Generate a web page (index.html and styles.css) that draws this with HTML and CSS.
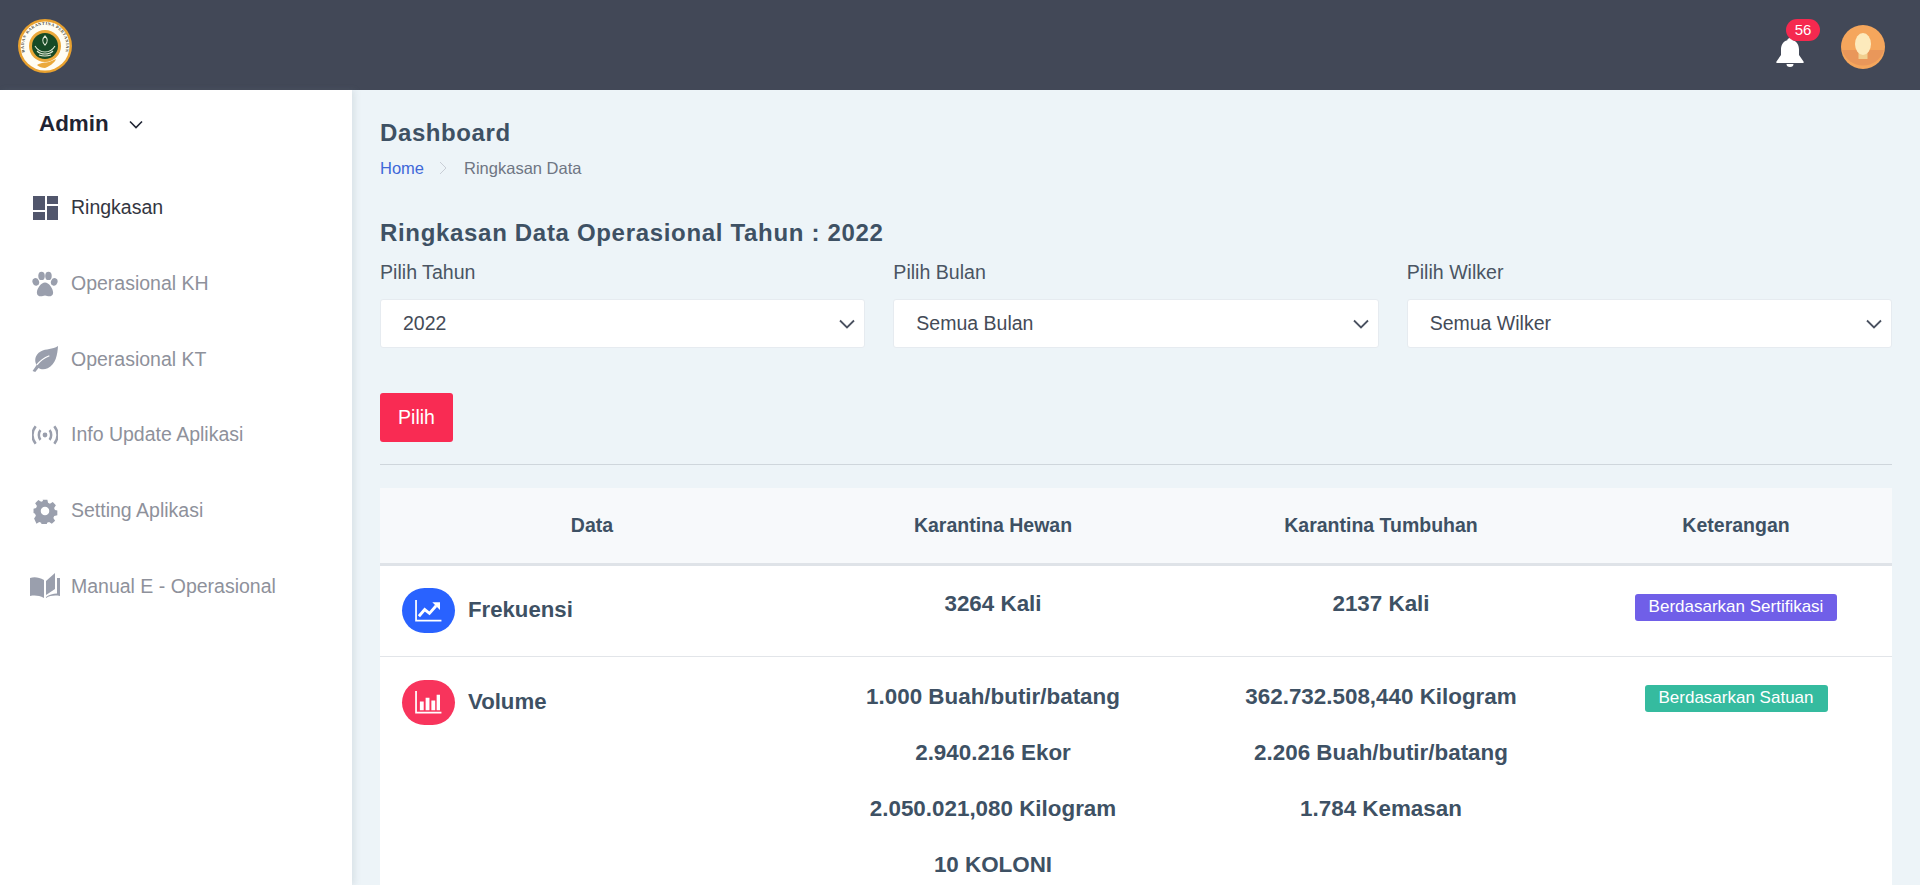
FILE: index.html
```html
<!DOCTYPE html>
<html lang="id">
<head>
<meta charset="utf-8">
<title>Dashboard</title>
<link rel="stylesheet" href="styles.css">
</head>
<body>
<header class="topbar">
  <svg class="logo" viewBox="0 0 54 54" aria-label="Logo">
    <defs><path id="logoArc" d="M11 41A21.200 21.200 0 1 1 43 41"/></defs>
    <circle cx="27" cy="27" r="27" fill="#e9a12e"/>
    <circle cx="27" cy="27" r="24.500" fill="#fffdf3"/>
    <text class="logo-text"><textPath href="#logoArc" startOffset="50%" text-anchor="middle">BADAN KARANTINA PERTANIAN</textPath></text>
    <circle cx="27" cy="27" r="16" fill="#eba93a"/>
    <circle cx="27" cy="27" r="13" fill="#174a25"/>
    <path d="M27 17c3 3 3 6 0 9c-3-3-3-6 0-9zM17 27c3 5 7 6 10 6s7-1 10-6M19 32c3 3 5 3 8 3s5 0 8-3M21 36c3 1 4 1 6 1s3 0 6-1" fill="none" stroke="#dfe8d4" stroke-width="1.100"/>
    <path d="M19 46c5-3 8-2 12-3l7-3c-1 4-8 8-11 9c-3 0-6-1-8-3z" fill="#eba93a"/>
  </svg>
  <div class="top-actions">
    <div class="bell">
      <svg viewBox="0 0 30 30" class="bell-icon"><path d="M15 1c1.500 0 2.500 1 2.700 2.200C22 4.500 24 8 24 12.500V18l4.500 6.500c.5.8 0 1.500-.8 1.500H2.300c-.8 0-1.300-.7-.8-1.500L6 18v-5.500C6 8 8 4.500 12.300 3.200 12.500 2 13.500 1 15 1z" fill="#fff"/><path d="M11.500 27a3.500 3 0 0 0 7 0z" fill="#fff"/></svg>
      <span class="bell-count">56</span>
    </div>
    <svg class="avatar" viewBox="0 0 44 44" aria-label="Profil">
      <circle cx="22" cy="22" r="22" fill="#f5a65c"/>
      <path d="M1 25h42a22 22 0 0 1-42 0z" fill="#e9975a"/>
      <rect x="17.500" y="26" width="9" height="8" fill="#f1cf8f"/>
      <ellipse cx="22" cy="19" rx="8" ry="11" fill="#fdeabc"/>
    </svg>
  </div>
</header>

<div class="shell">
  <aside class="sidebar">
    <div class="user">Admin
      <svg class="user-caret" viewBox="0 0 14 9"><path d="M1 1.500l6 6 6-6" fill="none" stroke="#1f2433" stroke-width="1.600"/></svg>
    </div>
    <nav class="menu">
      <a class="menu-item active">
        <svg class="menu-icon dash" viewBox="0 0 25 24"><path d="M0 0h12v14H0zM14 0h11v8H14zM14 10h11v14H14zM0 16h12v8H0z"/></svg>
        Ringkasan
      </a>
      <a class="menu-item">
        <svg class="menu-icon" viewBox="0 0 24 24"><ellipse cx="3.500" cy="10" rx="3" ry="3.600" transform="rotate(-20 3.500 10)"/><ellipse cx="8.800" cy="4.500" rx="3" ry="3.900"/><ellipse cx="15.200" cy="4.500" rx="3" ry="3.900"/><ellipse cx="20.500" cy="10" rx="3" ry="3.600" transform="rotate(20 20.500 10)"/><path d="M12 10.500c3.500 0 7.500 5.500 7.500 9.500 0 2.500-2 3.300-3.500 3.300-1.700 0-2.500-.8-4-.8s-2.300.8-4 .8c-1.500 0-3.500-.8-3.500-3.300 0-4 4-9.500 7.500-9.500z"/></svg>
        Operasional KH
      </a>
      <a class="menu-item">
        <svg class="menu-icon" viewBox="0 0 24 24"><path d="M24 0c-.5 8-2 17-9.500 20.500-3.500 1.500-6.500 1-8.500-.3L3 24 .5 23l3.800-5.500C2 14 2.500 8 8 5c5-2.700 11-1.500 16-5z"/><path d="M4.500 17.500C7.500 13.500 11 11 16 9" fill="none" stroke="#fff" stroke-width="1.200"/></svg>
        Operasional KT
      </a>
      <a class="menu-item">
        <svg class="menu-icon" viewBox="0 0 24 24"><circle cx="12" cy="12" r="2.200"/><path d="M7.800 7.500C5.800 10 5.800 14 7.800 16.500M16.200 7.500c2 2.500 2 6.500 0 9M3.400 4C-.4 9-.4 15 3.400 20M20.600 4c3.800 5 3.800 11 0 16" fill="none" stroke="#9a9fad" stroke-width="2.300"/></svg>
        Info Update Aplikasi
      </a>
      <a class="menu-item">
        <svg class="menu-icon" viewBox="0 0 24 24"><path fill-rule="evenodd" d="M9.500 0h5l.7 3.400 2 .9 3-1.900 3.300 3.500-1.900 2.900.9 2.100 2.500.6v5l-3.300.7-.9 2.100 1.900 2.900-3.500 3.300-2.900-1.900-2.100.9-.6 3.300h-5l-.6-3.300-2.100-.9-2.900 1.900L.5 20l1.900-2.900-.9-2.100L-.1 14V9.500l2.700-.6.9-2.100-1.900-2.900L5 .4l2.900 1.900 2-.9zM12 7.500a4.500 4.500 0 1 0 0 9 4.500 4.500 0 0 0 0-9z" transform="translate(1.500 1.500) scale(.875)"/></svg>
        Setting Aplikasi
      </a>
      <a class="menu-item">
        <svg class="menu-icon wide" viewBox="0 0 30 26"><path d="M0 5c5-1.500 9-.5 14 2v18c-5-2.500-9-3-14-2zM16 8l9-8v16l-9 6zM27 5h3v18c-5-1-10-.5-14 2v-1c3-2 7-3.500 11-3.500z"/></svg>
        Manual E - Operasional
      </a>
    </nav>
  </aside>

  <main class="content">
    <h1 class="page-title">Dashboard</h1>
    <div class="crumbs">
      <a class="crumb-link">Home</a>
      <svg class="crumb-sep" viewBox="0 0 8 14"><path d="M1 1l6 6-6 6" fill="none" stroke="#c9ced6" stroke-width="1"/></svg>
      <span>Ringkasan Data</span>
    </div>
    <h2 class="section-title">Ringkasan Data Operasional Tahun : 2022</h2>
    <div class="filters">
      <div class="field"><label class="field-label">Pilih Tahun</label>
        <div class="select"><span>2022</span><svg class="select-caret" viewBox="0 0 16 10"><path d="M1 1.500l7 7 7-7" fill="none" stroke="#4a5160" stroke-width="1.800"/></svg></div></div>
      <div class="field"><label class="field-label">Pilih Bulan</label>
        <div class="select"><span>Semua Bulan</span><svg class="select-caret" viewBox="0 0 16 10"><path d="M1 1.500l7 7 7-7" fill="none" stroke="#4a5160" stroke-width="1.800"/></svg></div></div>
      <div class="field"><label class="field-label">Pilih Wilker</label>
        <div class="select"><span>Semua Wilker</span><svg class="select-caret" viewBox="0 0 16 10"><path d="M1 1.500l7 7 7-7" fill="none" stroke="#4a5160" stroke-width="1.800"/></svg></div></div>
    </div>
    <button class="btn">Pilih</button>
    <hr class="divider">
    <table class="data-table">
      <colgroup><col class="c1"><col class="c2"><col class="c3"><col class="c4"></colgroup>
      <thead>
        <tr><th>Data</th><th>Karantina Hewan</th><th>Karantina Tumbuhan</th><th>Keterangan</th></tr>
      </thead>
      <tbody>
        <tr>
          <td class="name-cell"><div class="name">
            <span class="blob blue"><svg viewBox="0 0 28 24"><path d="M1 1v21.500h26.500" fill="none" stroke="#fff" stroke-width="1.800"/><path d="M4 18l6-7 5 4 7-8" fill="none" stroke="#fff" stroke-width="3"/><path d="M18 3.500h8v8z" fill="#fff"/></svg></span>
            Frekuensi</div></td>
          <td class="num"><p>3264 Kali</p></td>
          <td class="num"><p>2137 Kali</p></td>
          <td class="note"><span class="tag purple">Berdasarkan Sertifikasi</span></td>
        </tr>
        <tr class="row-volume">
          <td class="name-cell"><div class="name">
            <span class="blob red"><svg viewBox="0 0 28 24"><path d="M1 0v22.500h26.500" fill="none" stroke="#fff" stroke-width="1.800"/><path d="M5 11h4v9H5zM11 7h4v13h-4zM17 10h4v10h-4zM22.500 4h3.500v16h-3.500z" fill="#fff"/></svg></span>
            Volume</div></td>
          <td class="num"><p>1.000 Buah/butir/batang</p><p>2.940.216 Ekor</p><p>2.050.021,080 Kilogram</p><p>10 KOLONI</p></td>
          <td class="num"><p>362.732.508,440 Kilogram</p><p>2.206 Buah/butir/batang</p><p>1.784 Kemasan</p></td>
          <td class="note"><span class="tag green">Berdasarkan Satuan</span></td>
        </tr>
      </tbody>
    </table>
  </main>
</div>
</body>
</html>
```
FILE: styles.css
```css
* { box-sizing: border-box; }
html, body { margin: 0; height: 100%; overflow: hidden; }
body { font-family: "Liberation Sans", Arial, sans-serif; background: #edf4f8; color: #3e5164; }

.topbar { height: 90px; background: #424857; display: flex; align-items: center; justify-content: space-between; padding: 0 35px 0 18px; }
.logo { width: 54px; height: 54px; display: block; margin-top: 2px; }
.logo-text { font-family: "Liberation Serif", serif; font-size: 4.200px; font-weight: 700; letter-spacing: .45px; fill: #4b4a3a; }
.top-actions { display: flex; align-items: center; gap: 36px; }
.bell { position: relative; width: 30px; height: 30px; margin-top: 13px; }
.bell-icon { width: 30px; height: 30px; display: block; }
.bell-count { position: absolute; left: 11px; top: -18px; width: 34px; height: 22px; border-radius: 11px; background: #f5294f; color: #fff; font-size: 15px; line-height: 22px; text-align: center; }
.avatar { width: 44px; height: 44px; display: block; margin-top: 4px; }

.shell { display: flex; height: 795px; }
.sidebar { width: 352px; flex: none; background: #fff; box-shadow: 3px 0 6px rgba(120, 135, 150, .16); position: relative; }
.user { display: flex; gap: 20px; padding: 19px 0 0 39px; height: 80px; font-size: 22.400px; font-weight: 700; color: #1f2433; line-height: 30px; align-items: flex-start; }
.user-caret { width: 14px; height: 9px; margin-top: 11px; }
.menu { display: flex; flex-direction: column; }
.menu-item { display: flex; align-items: center; height: 75.700px; padding-left: 32px; font-size: 19.500px; color: #8e919b; }
.menu-item.active { color: #33363f; }
.menu-icon { width: 26px; height: 26px; margin-right: 13px; fill: #9a9fad; flex: none; }
.menu-item.active .menu-icon { fill: #51566c; }
.menu-icon.dash { width: 25px; height: 24px; margin-left: 1px; }
.menu-icon.wide { width: 30px; margin-left: -2px; margin-right: 11px; }

.content { flex: 1; padding: 28px 28px 0; overflow: hidden; min-width: 0; }
.page-title { margin: 0; font-size: 24px; line-height: 30px; font-weight: 700; letter-spacing: .6px; color: #3e5164; }
.crumbs { display: flex; align-items: center; margin-top: 10px; font-size: 16.500px; line-height: 20px; color: #6f7683; }
.crumb-link { color: #3f68d8; }
.crumb-sep { width: 8px; height: 14px; margin: 0 17px 0 15px; }
.section-title { margin: 40px 0 0; font-size: 24px; line-height: 30px; font-weight: 700; letter-spacing: .68px; color: #3e5164; }

.filters { display: grid; grid-template-columns: repeat(3, 1fr); gap: 28px; margin-top: 12px; }
.field-label { display: block; font-size: 19.600px; line-height: 24px; color: #4a5563; }
.select { display: flex; align-items: center; justify-content: space-between; height: 49px; margin-top: 15px; padding: 0 9px 0 22px; background: #fff; border: 1px solid #e6ebf0; border-radius: 3px; font-size: 19.500px; color: #444b57; }
.select-caret { width: 16px; height: 10px; }
.btn { display: block; width: 73px; height: 49px; margin-top: 45px; padding: 0; border: 0; border-radius: 3px; background: #f92b53; color: #fff; font: 19.500px "Liberation Sans", Arial, sans-serif; }
.divider { border: 0; border-top: 1px solid #cfd6dc; margin: 22px 0 0; }

.data-table { width: 100%; margin-top: 23px; table-layout: fixed; border-collapse: collapse; background: #fff; }
.c1 { width: 424px; } .c2 { width: 378px; } .c3 { width: 398px; } .c4 { width: 312px; }
.data-table th { height: 76px; background: #f7f9fb; border-bottom: 3px solid #dfe3e8; font-size: 19.500px; font-weight: 700; color: #3e5164; text-align: center; }
.data-table td { vertical-align: top; border-bottom: 1px solid #e2e5e9; }
.name-cell { padding: 22px 0 0 22px; }
.row-volume .name-cell { padding-top: 23px; }
.name { display: flex; align-items: center; font-size: 22.200px; font-weight: 700; color: #3e5164; }
.blob { width: 53px; height: 45px; border-radius: 23px; display: flex; align-items: center; justify-content: center; margin-right: 13px; flex: none; }
.blob svg { width: 27px; height: 23px; }
.blue { background: #2962ff; }
.red { background: #f8345c; }
.num { text-align: center; font-size: 22.400px; font-weight: 700; color: #3e5164; padding: 25px 0 9px; }
.row-volume .num { padding-top: 27px; }
.num p { margin: 0 0 30px; line-height: 26px; }
.note { text-align: center; padding-top: 28px; }
.tag { display: inline-block; height: 27px; line-height: 25px; padding: 0 14px; border-radius: 3px; color: #fff; font-size: 17px; }
.purple { background: #705fe8; }
.green { background: #35bb9f; }
```
